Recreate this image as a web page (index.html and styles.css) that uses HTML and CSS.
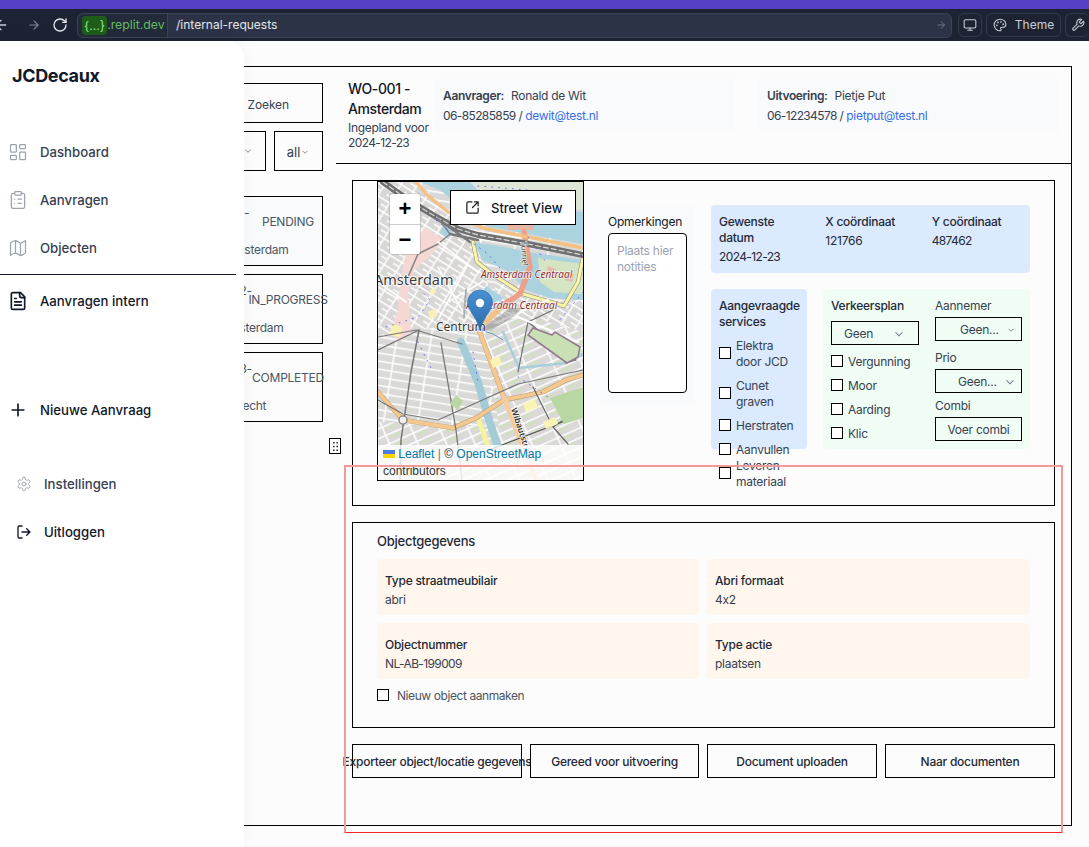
FILE: index.html
```html
<!DOCTYPE html>
<html lang="nl">
<head>
<meta charset="utf-8">
<title>JCDecaux - Aanvragen intern</title>
<link rel="stylesheet" href="styles.css">
</head>
<body>
<div class="accent-bar"></div>
<header class="toolbar">
  <div class="nav-icons">
    <svg class="tb-icon back" viewBox="0 0 24 24"><path d="M19 12H5M12 19l-7-7 7-7"/></svg>
    <svg class="tb-icon fwd" viewBox="0 0 24 24"><path d="M5 12h14M12 5l7 7-7 7"/></svg>
    <svg class="tb-icon reload" viewBox="0 0 24 24"><path d="M21 12a9 9 0 1 1-9-9c2.52 0 4.93 1 6.74 2.74L21 8"/><path d="M21 3v5h-5"/></svg>
  </div>
  <div class="address">
    <span class="host"><span class="chip">{...}</span>.replit.dev</span>
    <span class="path">/internal-requests</span>
    <svg class="go" viewBox="0 0 24 24"><path d="M5 12h14M12 5l7 7-7 7"/></svg>
  </div>
  <button class="tb-btn square"><svg viewBox="0 0 24 24"><rect x="2" y="3" width="20" height="14" rx="2"/><path d="M8 21h8M12 17v4"/></svg></button>
  <button class="tb-btn theme"><svg viewBox="0 0 24 24"><path d="M12 22a1 1 0 0 1 0-20 10 9 0 0 1 10 9 5 5 0 0 1-5 5h-2.25a1.75 1.75 0 0 0-1.4 2.8l.3.4a1.75 1.75 0 0 1-1.4 2.8z"/><circle cx="13.5" cy="6.5" r=".6"/><circle cx="17.5" cy="10.5" r=".6"/><circle cx="6.5" cy="12.5" r=".6"/><circle cx="8.5" cy="7.5" r=".6"/></svg>Theme</button>
  <button class="tb-btn square last"><svg viewBox="0 0 24 24"><path d="M14.7 6.3a1 1 0 0 0 0 1.4l1.6 1.6a1 1 0 0 0 1.4 0l3.77-3.77a6 6 0 0 1-7.94 7.94l-6.91 6.91a2.12 2.12 0 0 1-3-3l6.91-6.91a6 6 0 0 1 7.94-7.94l-3.76 3.76z"/></svg></button>
</header>

<div class="page">
  <aside class="sidebar">
    <div class="brand">JCDecaux</div>
    <nav class="nav">
      <a class="nav-item muted"><svg class="ic" viewBox="0 0 24 24"><rect x="3" y="3" width="7" height="9" rx="1"/><rect x="14" y="3" width="7" height="5" rx="1"/><rect x="14" y="12" width="7" height="9" rx="1"/><rect x="3" y="16" width="7" height="5" rx="1"/></svg>Dashboard</a>
      <a class="nav-item muted"><svg class="ic" viewBox="0 0 24 24"><rect x="8" y="2" width="8" height="4" rx="1"/><path d="M16 4h2a2 2 0 0 1 2 2v14a2 2 0 0 1-2 2H6a2 2 0 0 1-2-2V6a2 2 0 0 1 2-2h2M12 11h4M12 16h4M8 11h.01M8 16h.01"/></svg>Aanvragen</a>
      <a class="nav-item muted"><svg class="ic" viewBox="0 0 24 24"><path d="M3 6c2-2 4-3 6-3s4 3 6 3 4-2 6-3v15c-2 1-4 3-6 3s-4-3-6-3-4 1-6 3zM9 3v15M15 6v15"/></svg>Objecten</a>
    </nav>
    <div class="nav-divider"></div>
    <a class="nav-item active"><svg class="ic dark" viewBox="0 0 24 24"><path d="M15 2H6a2 2 0 0 0-2 2v16a2 2 0 0 0 2 2h12a2 2 0 0 0 2-2V7Z"/><path d="M14 2v4a2 2 0 0 0 2 2h4M10 9H8M16 13H8M16 17H8"/></svg>Aanvragen intern</a>
    <a class="nav-item plain new"><svg class="ic dark" viewBox="0 0 24 24"><path d="M5 12h14M12 5v14"/></svg>Nieuwe Aanvraag</a>
    <a class="nav-item muted foot first"><svg class="ic small" viewBox="0 0 24 24"><path d="M12.22 2h-.44a2 2 0 0 0-2 2v.18a2 2 0 0 1-1 1.73l-.43.25a2 2 0 0 1-2 0l-.15-.08a2 2 0 0 0-2.73.73l-.22.38a2 2 0 0 0 .73 2.73l.15.1a2 2 0 0 1 1 1.72v.51a2 2 0 0 1-1 1.74l-.15.09a2 2 0 0 0-.73 2.73l.22.38a2 2 0 0 0 2.73.73l.15-.08a2 2 0 0 1 2 0l.43.25a2 2 0 0 1 1 1.73V20a2 2 0 0 0 2 2h.44a2 2 0 0 0 2-2v-.18a2 2 0 0 1 1-1.73l.43-.25a2 2 0 0 1 2 0l.15.08a2 2 0 0 0 2.73-.73l.22-.39a2 2 0 0 0-.73-2.73l-.15-.08a2 2 0 0 1-1-1.74v-.5a2 2 0 0 1 1-1.74l.15-.09a2 2 0 0 0 .73-2.73l-.22-.38a2 2 0 0 0-2.73-.73l-.15.08a2 2 0 0 1-2 0l-.43-.25a2 2 0 0 1-1-1.73V4a2 2 0 0 0-2-2z"/><circle cx="12" cy="12" r="3"/></svg>Instellingen</a>
    <a class="nav-item plain foot"><svg class="ic small dark" viewBox="0 0 24 24"><path d="M9 21H5a2 2 0 0 1-2-2V5a2 2 0 0 1 2-2h4M16 17l5-5-5-5M21 12H9"/></svg>Uitloggen</a>
  </aside>

  <main class="frame">
    <section class="list-col">
      <div class="box search">Zoeken</div>
      <div class="filters">
        <div class="box filter wide"><svg class="chev" viewBox="0 0 24 24"><path d="M6 9l6 6 6-6"/></svg></div>
        <div class="box filter narrow">all<svg class="chev" viewBox="0 0 24 24"><path d="M6 9l6 6 6-6"/></svg></div>
      </div>
      <div class="cards">
        <article class="card current">
          <div class="card-top"><div class="card-id">WO-001-</div><div class="status">PENDING</div></div>
          <div class="loc">Amsterdam</div>
        </article>
        <article class="card">
          <div class="card-top"><div class="card-id">WO-002-<br>2024-1</div><div class="status">IN_PROGRESS</div></div>
          <div class="loc shift">Amsterdam</div>
        </article>
        <article class="card">
          <div class="card-top"><div class="card-id">WO-003-<br>2024-1</div><div class="status">COMPLETED</div></div>
          <div class="loc">Utrecht</div>
        </article>
      </div>
      <div class="handle"><svg viewBox="0 0 9 13"><path d="M2 2h1.6v1.6H2zM5.4 2H7v1.6H5.4zM2 5.7h1.6v1.6H2zM5.4 5.7H7v1.6H5.4zM2 9.4h1.6V11H2zM5.4 9.4H7V11H5.4z"/></svg></div>
    </section>

    <section class="detail">
      <header class="detail-head">
        <div class="wo">
          <h2>WO-001 - Amsterdam</h2>
          <p>Ingepland voor <span class="num">2024-12-23</span></p>
        </div>
        <div class="contact">
          <div><b>Aanvrager:</b> Ronald de Wit</div>
          <div><span class="num">06-85285859 /</span> <a>dewit@test.nl</a></div>
        </div>
        <div class="contact">
          <div><b>Uitvoering:</b> Pietje Put</div>
          <div><span class="num">06-12234578 /</span> <a>pietput@test.nl</a></div>
        </div>
      </header>

      <div class="detail-body">
        <section class="panel top-panel">
          <div class="map">
            <svg class="map-art" viewBox="0 0 205 298" aria-hidden="true">
              <defs>
                <pattern id="blocksA" width="34" height="8" patternUnits="userSpaceOnUse" patternTransform="rotate(9)">
                  <rect width="34" height="8" fill="#d9d9d8"/>
                  <path d="M0 .8h34M9 0v8" stroke="#fff" stroke-width="1.500"/>
                </pattern>
                <pattern id="blocksB" width="26" height="9" patternUnits="userSpaceOnUse" patternTransform="rotate(-24)">
                  <rect width="26" height="9" fill="#dad9d7"/>
                  <path d="M0 .8h26M8 0v9" stroke="#fff" stroke-width="1.500"/>
                  <rect x="12" y="3" width="10" height="2" fill="#cfe2b9"/>
                </pattern>
                <pattern id="blocksC" width="14" height="11" patternUnits="userSpaceOnUse" patternTransform="rotate(32)">
                  <rect width="14" height="11" fill="#d8d7d6"/>
                  <path d="M0 .8h14M7 0v11M0 6h7" stroke="#fff" stroke-width="1.400"/>
                </pattern>
                <linearGradient id="pin" x1="0" y1="0" x2="0" y2="1">
                  <stop offset="0" stop-color="#4a90d0"/><stop offset="1" stop-color="#2a6cae"/>
                </linearGradient>
              </defs>
              <rect width="205" height="298" fill="url(#blocksA)"/>
              <path d="M0 0H40L72 30 100 55 96 62 104 80 120 140 60 145 0 155Z" fill="url(#blocksC)"/>
              <path d="M105 148L205 112V298H130Z" fill="url(#blocksB)"/>
              <path d="M0 240L120 245 150 298H0Z" fill="url(#blocksB)"/>
              <path d="M120 88L150 112 205 124V150L170 140 140 135 112 135Z" fill="url(#blocksC)"/>
              <path d="M42 0H92L112 22 205 30V62L150 52 108 44 84 26 62 8Z" fill="#aad3df"/>
              <path d="M92 0H205V28L112 20Z" fill="#dfe5d6"/>
              <path d="M96 60L132 66 150 70 205 78V118L172 116 148 108 128 88 104 78Z" fill="#aad3df"/>
              <path d="M160 76L205 82V112L176 110 162 100Z" fill="#d5e4c2"/>
              <path d="M170 84l8 3-2 7-7-2zM188 90l8 2-2 8-7-2z" fill="#e4b9b0"/>
              <path d="M66 42l10 7-6 8-8-6z" fill="#aad3df"/>
              <path d="M108 104l18 12-16 11-10-10z" fill="#aad3df"/>
              <path d="M47 45L66 58 50 76 36 88 30 112 33 150 22 160 12 152 20 128 22 98 28 72Z" fill="#f5d8d4"/>
              <path d="M14 142l10 3-2 10-10-2z" fill="#f9f1b4"/>
              <path d="M50 130l7-3 2 7-7 3zM52 108l5-2 1 5-5 2z" fill="#f9f1b4"/>
              <path d="M156 48h-26v-6h26z" fill="#e8b6a4"/>
              <g fill="none" stroke-linejoin="round" stroke-linecap="round">
                <path d="M83 160L100 200 111 238 119 262" stroke="#a3ccd8" stroke-width="8"/>
                <path d="M125 150L141 186 188 181 205 172" stroke="#a6cfdb" stroke-width="2.500"/>
                <path d="M100 236L110 264" stroke="#f6f39d" stroke-width="5"/>
                <path d="M-2 208L25 238 75 246 98 236 126 218 165 210 188 198 208 192" stroke="#b89b71" stroke-width="4.800"/>
                <path d="M-2 208L25 238 75 246 98 236 126 218 165 210 188 198 208 192" stroke="#f5c88f" stroke-width="3.800"/>
                <path d="M95 60L99 80 114 92 145 112 186 124 200 100 205 76" stroke="#8c8a7a" stroke-width="4.200"/>
                <path d="M95 60L99 80 114 92 145 112 186 124 200 100 205 76" stroke="#f7f4a8" stroke-width="3.200"/>
                <path d="M146 50L152 85 142 112 120 126" stroke="#ec9f8a" stroke-width="5.500"/>
                <path d="M124 124L102 146" stroke="#f0c489" stroke-width="5.500"/>
                <path d="M101 148L126 216" stroke="#c49d6c" stroke-width="5"/>
                <path d="M101 148L126 216" stroke="#f5c88f" stroke-width="4"/>
                <path d="M126 216L146 268 158 298" stroke="#f3cda0" stroke-width="5"/>
                <path d="M38 0L48 12 70 30 105 46 150 55 205 66" stroke="#f4c084" stroke-width="3.400"/>
                <path d="M5 0L30 18 60 36 80 47 100 53 150 62 205 73" stroke="#6f6f6f" stroke-width="6"/>
                <path d="M5 0L30 18 60 36 80 47 100 53 150 62 205 73" stroke="#d8d8d8" stroke-width="1.200" stroke-dasharray="5 3"/>
                <path d="M60 36L72 52 60 62 40 72 30 95" stroke="#888" stroke-width="1.600"/>
                <path d="M64 40L92 60M72 52L100 58" stroke="#777" stroke-width="2.400"/>
                <path d="M41 148L33 190 23 258 22 298" stroke="#777" stroke-width="1.500"/>
                <path d="M63 161L78 248 84 298" stroke="#777" stroke-width="1.300"/>
                <path d="M0 155L38 148 84 162M0 218L25 232 60 238 140 202 205 188" stroke="#777" stroke-width="1.200"/>
                <path d="M150 140L140 190M150 140L175 128M150 140L198 178 188 181M0 168L41 148" stroke="#6f6f6f" stroke-width="1.200"/>
                <path d="M155 205L175 245 205 225M175 245L190 262" stroke="#666" stroke-width="1.200"/>
                <path d="M111 268L205 232" stroke="#555" stroke-width="1.200"/>
                <path d="M0 100L28 120M60 85L85 130M70 120L104 100M90 82L60 138M60 60L100 90" stroke="#fff" stroke-width="1.600"/>
                <path d="M95 140L120 120M128 130L200 160M120 140L170 118" stroke="#fff" stroke-width="2"/>
                <path d="M88 108L86 135" stroke="#aaa" stroke-width="2" stroke-dasharray="3 2"/>
                <path d="M90 144L115 152 125 158" stroke="#69c" stroke-width="1"/>
                <path d="M8 145L40 135 52 118 30 95M58 38L72 50M96 62L110 72 122 86M150 55L168 80M205 110L180 140M40 160L55 190M95 170L100 200M140 195L170 215M100 4L200 12" stroke="#5a5af0" stroke-width=".9" stroke-dasharray=".9 6"/>
              </g>
              <path d="M150 153L155 146 174 153 177 150 202 165 200 175 189 181Z" fill="#c9e0b4" stroke="#957b92" stroke-width="1.600"/>
              <path d="M172 216L205 205V236L186 242Z" fill="#b9d7a2"/>
              <path d="M112 178l9-4 3 8-9 4zM145 222l12-5 3 8-12 5zM165 240l12-5 3 7-12 5z" fill="#f9f3b4"/>
              <path d="M72 222l6-9 7 6-5 9z" fill="#b9d7a2"/>
              <circle cx="25" cy="238" r="4" fill="#eee" stroke="#777" stroke-width="1.200"/>
              <g class="map-labels">
                <text class="map-city" x="-4" y="103">Amsterdam</text>
                <text class="map-stn" x="103" y="96">Amsterdam Centraal</text>
                <text class="map-stn" x="88" y="127">Amsterdam Centraal</text>
                <text class="map-area" x="58" y="149">Centrum</text>
                <text class="map-road" transform="translate(133 227) rotate(72)">Wibautstraat</text>
                <text class="map-road thin" transform="translate(143 60) rotate(86)">Tunnel</text>
              </g>
              <path d="M102 148l30-22h12l-6 7-25 16z" fill="#000" opacity=".2"/>
              <path d="M102 148C98 134 89.500 128 89.500 120.500A12.500 12.500 0 0 1 114.500 120.500C114.500 128 106 134 102 148Z" fill="url(#pin)" stroke="#2a6cae" stroke-width=".6"/>
              <circle cx="102" cy="121" r="4.200" fill="#fff"/>
            </svg>
            <div class="zoom-ctl"><span>+</span><span>−</span></div>
            <button class="street-btn"><svg viewBox="0 0 24 24"><path d="M21 13v6a2 2 0 0 1-2 2H5a2 2 0 0 1-2-2V5a2 2 0 0 1 2-2h6M21 3l-9 9M15 3h6v6"/></svg>Street View</button>
            <div class="attrib"><svg class="flag" viewBox="0 0 12 8"><rect width="12" height="4" fill="#4c7be1"/><rect y="4" width="12" height="4" fill="#ffd500"/></svg> <a>Leaflet</a> <span class="pipe">|</span> © <a>OpenStreetMap</a> contributors</div>
          </div>

          <div class="notes">
            <label class="notes-label" for="notes">Opmerkingen</label>
            <textarea id="notes" placeholder="Plaats hier notities"></textarea>
          </div>

          <div class="facts">
            <div class="dates">
              <div><h4>Gewenste datum</h4><p class="num">2024-12-23</p></div>
              <div><h4>X coördinaat</h4><p>121766</p></div>
              <div><h4>Y coördinaat</h4><p class="num">487462</p></div>
            </div>
            <div class="facts-row">
              <div class="services">
                <h4>Aangevraagde services</h4>
                <ul class="svc-list">
                  <li><input type="checkbox"><span>Elektra door JCD</span></li>
                  <li><input type="checkbox"><span>Cunet graven</span></li>
                  <li><input type="checkbox"><span>Herstraten</span></li>
                  <li><input type="checkbox"><span>Aanvullen</span></li>
                  <li class="svc-last"><input type="checkbox"><span>Leveren materiaal</span></li>
                </ul>
              </div>
              <div class="plan">
                <div class="plan-left">
                  <h4>Verkeersplan</h4>
                  <div class="sel sel-plan"><span>Geen</span><svg class="chev big" viewBox="0 0 24 24"><path d="M6 9l6 6 6-6"/></svg></div>
                  <ul class="plan-checks">
                    <li><input type="checkbox"><span>Vergunning</span></li>
                    <li><input type="checkbox"><span>Moor</span></li>
                    <li><input type="checkbox"><span>Aarding</span></li>
                    <li><input type="checkbox"><span>Klic</span></li>
                  </ul>
                </div>
                <div class="plan-right">
                  <label class="lbl">Aannemer</label>
                  <div class="sel sel-a"><span>Geen...</span><svg class="chev" viewBox="0 0 24 24"><path d="M6 9l6 6 6-6"/></svg></div>
                  <label class="lbl lbl-prio">Prio</label>
                  <div class="sel sel-b"><span>Geen...</span><svg class="chev big" viewBox="0 0 24 24"><path d="M6 9l6 6 6-6"/></svg></div>
                  <label class="lbl lbl-combi">Combi</label>
                  <button class="sel sel-c">Voer combi</button>
                </div>
              </div>
            </div>
          </div>
        </section>

        <section class="panel object-panel">
          <h3>Objectgegevens</h3>
          <div class="obj-grid">
            <div class="obj"><h4>Type straatmeubilair</h4><p>abri</p></div>
            <div class="obj"><h4>Abri formaat</h4><p>4x2</p></div>
            <div class="obj"><h4>Objectnummer</h4><p class="num">NL-AB-199009</p></div>
            <div class="obj"><h4>Type actie</h4><p>plaatsen</p></div>
          </div>
          <label class="new-obj"><input type="checkbox"><span>Nieuw object aanmaken</span></label>
        </section>

        <div class="actions">
          <button>Exporteer object/locatie gegevens</button>
          <button>Gereed voor uitvoering</button>
          <button>Document uploaden</button>
          <button>Naar documenten</button>
        </div>
      </div>
    </section>
  </main>
</div>
<div class="annotation"></div>
</body>
</html>
```

FILE: styles.css
```css
* { box-sizing: border-box; }
html, body { margin: 0; height: 847px; overflow: hidden; }
body { background: #fcfcfc; color: #1f2937; font: 12px/16px Inter, "Liberation Sans", sans-serif; font-feature-settings: "calt" 0; letter-spacing: -.25px; position: relative; }
h2, h3, h4, p, ul { margin: 0; padding: 0; }
ul { list-style: none; }
button { font: inherit; letter-spacing: inherit; color: inherit; background: #fff; cursor: pointer; }
input[type=checkbox] { appearance: none; margin: 0; width: 12px; height: 12px; border: 1px solid #000; background: #fff; flex: none; border-radius: 0; }
input[type=checkbox] + span { padding-top: 1px; margin-bottom: -1px; }
.num { letter-spacing: -.62px; }

.accent-bar { height: 9px; background: #5540c6; }
.toolbar { height: 32px; background: #1e2334; display: flex; align-items: center; padding-right: 0; color: #d7dbe3; overflow: hidden; letter-spacing: 0; }
.nav-icons { width: 77px; flex: none; display: flex; align-items: center; position: relative; height: 100%; }
.tb-icon { fill: none; stroke-linecap: round; stroke-linejoin: round; stroke-width: 2; flex: none; }
.back { width: 16px; height: 16px; stroke: #c8ccd4; margin-left: -7px; }
.fwd { width: 14px; height: 14px; stroke: #7f8594; margin-left: 18px; }
.reload { width: 16px; height: 16px; stroke: #e5e7eb; margin-left: 11px; }
.address { flex: 1; height: 25px; background: #2d3347; border: 1px solid #3c4257; border-radius: 6px; display: flex; align-items: center; font-size: 12px; margin-right: 6px; }
.host { color: #62bd62; display: flex; align-items: center; height: 100%; padding: 0 4px; border-right: 1px solid #3c4257; background: #232a3a; border-radius: 6px 0 0 6px; font-size: 12.300px; width: 90px; }
.chip { background: #1f5c1a; color: #93e48b; border-radius: 4px; padding: 2px; line-height: 15px; font-size: 12.300px; }
.path { color: #e5e7eb; margin-left: 8px; flex: 1; }
.go { width: 12px; height: 12px; fill: none; stroke: #6f7585; stroke-width: 2; margin-right: 4px; }
.tb-btn { height: 24px; border: 1px solid #343a4d; background: transparent; border-radius: 6px; display: flex; align-items: center; justify-content: center; color: #c9ced6; padding: 0; flex: none; font-size: 12px; }
.tb-btn svg { width: 14px; height: 14px; fill: none; stroke: #c9ced6; stroke-width: 1.800; stroke-linecap: round; stroke-linejoin: round; }
.square { width: 24px; }
.theme { width: 75px; margin: 0 4px; gap: 8px; }
.last { border-right: 0; }

.page { height: 806px; padding: 25px 0 0 100px; }
.sidebar { position: absolute; z-index: 2; left: 0; top: 41px; bottom: 0; width: 244px; background: #fff; border-top-right-radius: 16px; box-shadow: 0 0 18px rgba(0, 0, 0, .04); padding-top: 87px; letter-spacing: 0; }
.brand { position: absolute; left: 12px; top: 23px; font-size: 18px; line-height: 24px; font-weight: 700; color: #111827; letter-spacing: -.35px; }
.nav { display: flex; flex-direction: column; }
.nav-item { display: flex; align-items: center; height: 48px; padding-left: 8px; gap: 12px; font-size: 13.200px; font-weight: 500; color: #374151; }
.nav-item.plain, .nav-item.active { color: #111827; }
.ic { width: 20px; height: 20px; fill: none; stroke: #9ca3af; stroke-width: 1.500; stroke-linecap: round; stroke-linejoin: round; flex: none; }
.ic.dark { stroke: #111827; stroke-width: 2; }
.ic.small { width: 16px; height: 16px; }
.nav-divider { width: 236px; height: 1px; background: #111827; margin: 2px 0; }
.new { margin-top: 61px; }
.foot { padding-left: 16px; }
.first { margin-top: 26px; }

.frame { width: 972px; height: 760px; border: 1px solid #000; display: flex; background: #fcfcfc; }
.list-col { width: 235px; flex: none; padding: 16px 13px 0 16px; position: relative; }
.box { border: 1px solid #000; display: flex; align-items: center; color: #374151; }
.search { height: 40px; justify-content: flex-end; padding: 3px 33px 0 0; font-size: 12px; letter-spacing: -.1px; }
.filters { display: flex; gap: 8px; margin-top: 8px; }
.filter { height: 40px; }
.wide { flex: 1; justify-content: flex-end; padding-right: 12px; }
.narrow { width: 49px; justify-content: center; padding-top: 1px; font-size: 13px; letter-spacing: 0; }
.chev { width: 10px; height: 10px; fill: none; stroke: #6b7280; stroke-width: 2; flex: none; }
.chev.big { width: 14px; height: 14px; stroke-width: 1.800; }
.cards { display: flex; flex-direction: column; gap: 8px; margin-top: 25px; }
.card { height: 70px; border: 1px solid #000; padding: 8px 0 0 81px; color: #4b5563; }
.card.current { background: #f8fafc; }
.card-top { display: flex; height: 37px; }
.card-id { width: 59px; flex: none; line-height: 15px; }
.status { width: 60px; display: flex; justify-content: center; white-space: nowrap; padding-top: 9px; }
.loc { margin: 0 0 0 27px; line-height: 16px; }
.loc.shift { margin-left: 22px; }
.handle { position: absolute; z-index: 1; right: -5px; top: 371px; width: 12px; height: 16px; border: 1px solid #000; background: #fff; display: flex; align-items: center; justify-content: center; }
.handle svg { width: 9px; height: 13px; fill: #333; }

.detail { flex: 1; min-width: 0; display: flex; flex-direction: column; }
.detail-head { height: 97px; border-bottom: 1px solid #000; padding: 12px 12px 0; display: flex; align-items: flex-start; }
.wo { width: 87px; flex: none; letter-spacing: -.3px; }
.wo h2 { font-size: 14px; line-height: 20px; font-weight: 500; color: #111827; letter-spacing: -.4px; }
.wo p { line-height: 15px; color: #374151; margin-top: 1px; }
.contact { width: 300px; flex: none; height: 52px; background: #f8fafc; padding: 7px 8px 0; line-height: 20px; color: #374151; letter-spacing: -.3px; }
.contact + .contact { margin-left: 24px; }
.contact b { font-weight: 600; margin-right: 4px; letter-spacing: -.35px; }
.contact a { color: #3b6fe8; }

.detail-body { padding: 16px; display: flex; flex-direction: column; gap: 16px; }
.panel { border: 1px solid #000; }
.top-panel { height: 326px; display: flex; padding-left: 24px; }
.map { width: 207px; height: 300px; border: 1px solid #000; position: relative; overflow: hidden; flex: none; background: #dcdbd9; letter-spacing: 0; }
.map-art { display: block; width: 205px; height: 298px; }
.map-labels text { font-family: "Noto Sans", sans-serif; }
.map-city { font-size: 14.500px; fill: #3c3c3c; stroke: #fff; stroke-width: 1.500px; paint-order: stroke; }
.map-area { font-size: 12px; fill: #333; stroke: #fff; stroke-width: 1.500px; paint-order: stroke; }
.map-stn { font-size: 10px; font-style: italic; fill: #8c2a2e; stroke: #fff; stroke-width: 1.200px; paint-order: stroke; }
.map-road { font-size: 8.500px; fill: #3a3226; font-weight: 600; stroke: #fff; stroke-width: 1px; paint-order: stroke; }
.map-road.thin { font-weight: 400; font-size: 7.500px; }
.zoom-ctl { position: absolute; left: 12px; top: 12px; width: 30px; height: 60px; background: #fff; border-radius: 2px; box-shadow: 0 0 0 1px rgba(0, 0, 0, .12); display: flex; flex-direction: column; }
.zoom-ctl span { height: 30px; display: flex; align-items: center; justify-content: center; font: 700 22px/30px "Liberation Sans", sans-serif; color: #000; }
.zoom-ctl span + span { border-top: 1px solid #ccc; }
.street-btn { position: absolute; left: 72px; top: 8px; width: 126px; height: 35px; border: 1px solid #000; display: flex; align-items: center; padding: 0 0 0 14px; gap: 11px; font-size: 13px; font-weight: 500; color: #111827; }
.street-btn svg { width: 15px; height: 15px; fill: none; stroke: #222; stroke-width: 2; stroke-linecap: round; stroke-linejoin: round; flex: none; }
.attrib { position: absolute; left: 0; right: 0; bottom: 0; height: 35px; background: rgba(255, 255, 255, .8); padding: 1px 5px 0; font: 12px/17px "Liberation Sans", Arial, sans-serif; color: #333; }
.attrib a { color: #0078a8; }
.pipe { color: #777; }
.flag { width: 12px; height: 8px; }

.notes { width: 95px; height: 200px; margin: 24px 0 0 16px; background: #f8fafc; padding: 9px 8px 0; flex: none; }
.notes-label { display: block; color: #111827; line-height: 16px; margin-bottom: 3px; }
textarea { display: block; width: 79px; height: 160px; border: 1px solid #000; border-radius: 4px; background: #fff; font: 12px/16px Inter, sans-serif; letter-spacing: -.25px; padding: 9px 8px; resize: none; outline: 0; }
textarea::placeholder { color: #9ca3af; opacity: 1; }

.facts { margin: 24px 0 0 16px; width: 319px; flex: none; }
.facts h4, .obj h4 { font-size: 12px; line-height: 16px; font-weight: 500; color: #1f2937; }
.dates { height: 68px; background: #dbeafe; border-radius: 4px; padding: 9px 8px 0; display: grid; grid-template-columns: repeat(3, 1fr); gap: 16px; color: #1f2937; }
.dates p { margin-top: 3px; }
.facts-row { display: flex; gap: 16px; margin-top: 16px; }
.services { width: 96px; height: 160px; background: #dbeafe; border-radius: 4px; padding: 9px 8px 0; flex: none; }
.svc-list { display: flex; flex-direction: column; gap: 8px; margin-top: 7px; width: 78px; }
.svc-list li { display: flex; align-items: center; gap: 5px; color: #374151; }
.svc-list .svc-last { margin-top: -8px; }
.plan { flex: 1; height: 160px; background: #f0fdf4; border-radius: 4px; padding: 9px 8px 0; display: flex; gap: 16px; }
.plan-left { width: 88px; flex: none; }
.sel { border: 1px solid #000; background: #f0fdf4; display: flex; align-items: center; height: 24px; color: #374151; }
.sel-plan { margin-top: 7px; padding: 1px 12px 0; justify-content: space-between; }
.plan-checks { margin-top: 8px; display: flex; flex-direction: column; gap: 8px; }
.plan-checks li { display: flex; align-items: center; gap: 5px; height: 16px; color: #374151; }
.plan-right { flex: 1; min-width: 0; }
.lbl { display: block; line-height: 16px; height: 16px; margin-bottom: 3px; color: #374151; }
.lbl-prio { margin-top: 9px; }
.lbl-combi { margin-top: 5px; }
.sel-a { padding: 1px 0 0 24px; gap: 7px; }
.sel-b { padding: 1px 0 0 22px; gap: 6px; }
.sel-c { width: 100%; justify-content: center; padding: 1px 0 0; }

.object-panel { height: 206px; padding: 10px 24px 0; }
.object-panel h3 { font-size: 13px; line-height: 16px; font-weight: 500; color: #1f2937; }
.obj-grid { display: grid; grid-template-columns: 322px 1fr; gap: 8px; margin-top: 10px; }
.obj { height: 56px; background: #fff7ed; border-radius: 4px; padding: 14px 8px 0; }
.obj p { margin-top: 3px; color: #374151; }
.new-obj { display: flex; align-items: center; gap: 8px; margin-top: 8px; color: #4b5563; height: 16px; letter-spacing: -.42px; }
.actions { display: grid; grid-template-columns: 170px 169px 170px 170px; gap: 8px; }
.actions button { height: 34px; border: 1px solid #000; background: #fcfcfc; display: flex; align-items: center; justify-content: center; white-space: nowrap; font-weight: 500; color: #1f2937; padding: 1px 0 0; min-width: 0; }

.annotation { position: absolute; z-index: 3; left: 344px; top: 465px; width: 719px; height: 368px; border: 2px solid #f09a9a; border-bottom: 1px solid #f02a2a; pointer-events: none; }
```
